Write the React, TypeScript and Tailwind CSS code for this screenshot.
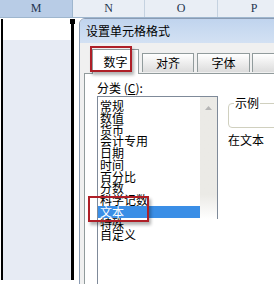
import React from "react";

const cjk = { fontFamily: '"Noto Sans CJK SC", "Noto Sans", sans-serif' };
const serif = { fontFamily: '"Liberation Serif", "DejaVu Serif", serif' };

const items = ["常规", "数值", "货币", "会计专用", "日期", "时间", "百分比", "分数", "科学记数", "文本", "特殊", "自定义"];

export default function App() {
  return (
    <div className="relative w-[274px] h-[284px] overflow-hidden bg-white text-black" style={cjk}>
      {/* spreadsheet */}
      <div className="flex flex-col">
        <div className="flex h-[18px] border-b border-[#9eb6ce] text-[12px] leading-[17px] text-[#1f3550]" style={serif}>
          <div className="w-[73px] shrink-0 bg-[#b8cce6] border-r border-[#9eb6ce] text-center">M</div>
          <div className="w-[72px] shrink-0 bg-[#e9eef5] border-r border-[#c5d2e0] text-center">N</div>
          <div className="w-[73px] shrink-0 bg-[#e9eef5] border-r border-[#c5d2e0] text-center">O</div>
          <div className="w-[72px] shrink-0 bg-[#e9eef5] text-center">P</div>
        </div>
        <div className="ml-[1px] mt-[1px] w-[73px] h-[261px] border-l-2 border-r-[3px] border-black flex flex-col">
          <div className="h-[21px] bg-white" />
          <div className="flex-1 bg-[#e7ebf4]" />
        </div>
      </div>
      <div className="absolute left-[70px] top-[19px] w-[5px] h-[5px] bg-black" />

      {/* dialog */}
      <div className="absolute left-[79px] top-[18px] w-[220px] h-[290px] border border-[#8a9bb3] rounded-tl-[6px] overflow-hidden bg-[#f0f0f0] flex flex-col">
        <div className="h-[24px] shrink-0 bg-linear-to-b from-[#c0d4ee] to-[#d3e1f3] pl-[6px] pt-[3px] text-[12px] leading-[18px]">
          设置单元格格式
        </div>
        <div className="h-[30px] shrink-0 flex items-end pl-[12px] text-[12px]">
          <div className="w-[47px] h-[25px] bg-white border border-b-0 border-[#919b9c] flex items-center justify-center leading-[14px] relative top-[1px]">
            数字
          </div>
          <div className="ml-[3px] w-[52px] h-[19px] mb-[1px] bg-linear-to-b from-white to-[#dcdcdc] border border-b-0 border-[#919b9c] flex items-center justify-center leading-[14px]">
            对齐
          </div>
          <div className="ml-[3px] w-[53px] h-[19px] mb-[1px] bg-linear-to-b from-white to-[#dcdcdc] border border-b-0 border-[#919b9c] flex items-center justify-center leading-[14px]">
            字体
          </div>
          <div className="ml-[2px] w-[40px] h-[19px] mb-[1px] bg-linear-to-b from-white to-[#dcdcdc] border border-b-0 border-[#919b9c]" />
        </div>
        <div className="ml-[4px] flex-1 bg-white border-l border-t border-[#919b9c] flex">
          <div className="pl-[12px] pt-[6px] flex flex-col">
            <div className="text-[12px] leading-[15px] h-[16px]">
              分类 (<span className="underline">C</span>):
            </div>
            <div className="w-[121px] flex-1 flex border-l border-t border-[#7f8a99]">
              <div className="flex-1 pt-[3px] text-[12px]">
                {items.map((t) => (
                  <div
                    key={t}
                    className={
                      "h-[11.75px] leading-[11.75px] pl-[2px] whitespace-nowrap " +
                      (t === "文本" ? "bg-[#3a8ee6] text-white" : "")
                    }
                  >
                    {t}
                  </div>
                ))}
              </div>
              <div className="w-[18px] h-[122px] border-r border-[#7f8a99] bg-linear-to-b from-[#ebeae6] via-[#ebeae6] via-80% to-white flex justify-center pt-[9px]">
                <svg width="7" height="4" viewBox="0 0 7 4">
                  <path d="M0 4 L3.5 0 L7 4 Z" fill="#b5b5b5" />
                </svg>
              </div>
            </div>
          </div>
          <div className="ml-[10px] pt-[23px] flex flex-col">
            <div className="relative w-[60px] h-[25px] border border-[#d0d0bf] rounded-[4px] mt-[6px]">
              <span className="absolute left-[5px] top-[-7px] bg-white px-[1px] text-[12px] leading-[12px]">示例</span>
            </div>
            <div className="mt-[6px] text-[12px] leading-[12px] whitespace-nowrap">在文本</div>
          </div>
        </div>
      </div>

      {/* annotations */}
      <div className="absolute left-[90px] top-[46px] w-[42px] h-[26px] border-2 border-[#ae1f27] shadow-[2px_3px_3px_rgba(0,0,0,0.3)]" />
      <div className="absolute left-[88px] top-[196px] w-[61px] h-[26px] border-2 border-[#ae1f27] shadow-[2px_3px_3px_rgba(0,0,0,0.3)]" />
    </div>
  );
}
